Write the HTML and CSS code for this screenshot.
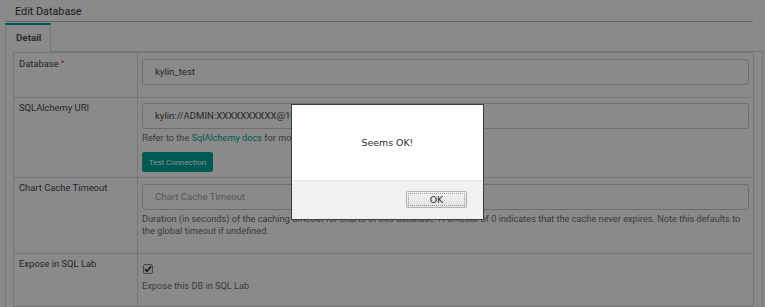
FILE: index.html
```html
<!DOCTYPE html>
<html>
<head>
<meta charset="utf-8">
<link rel="stylesheet" href="styles.css">
</head>
<body>
<div class="wrap">
  <div class="title">Edit Database</div>
  <ul class="tabs">
    <li class="tab active">Detail</li>
  </ul>
  <div class="tab-content">
    <table class="form">
      <colgroup><col class="c-label"><col></colgroup>
      <tr class="r1">
        <th>Database <span class="req">*</span></th>
        <td><div class="input">kylin_test</div></td>
      </tr>
      <tr class="r2">
        <th>SQLAlchemy URI</th>
        <td>
          <div class="input">kylin://ADMIN:XXXXXXXXXX@10.1.2.3:7070/learn_kylin</div>
          <div class="help">Refer to the <a class="link">SqlAlchemy docs</a> for more information on how to structure your URI.</div>
          <button class="btn">Test Connection</button>
        </td>
      </tr>
      <tr class="r3">
        <th>Chart Cache Timeout</th>
        <td>
          <div class="input placeholder">Chart Cache Timeout</div>
          <div class="help">Duration (in seconds) of the caching timeout for charts of this database. A timeout of 0 indicates that the cache never expires. Note this defaults to the global timeout if undefined.</div>
        </td>
      </tr>
      <tr class="r4">
        <th>Expose in SQL Lab</th>
        <td>
          <span class="check"><svg width="8" height="8" viewBox="0 0 8 8"><path d="M1 4.2 L3 6.2 L7 1.6" fill="none" stroke="#222" stroke-width="1.6"/></svg></span>
          <div class="help h4">Expose this DB in SQL Lab</div>
        </td>
      </tr>
      <tr class="r5">
        <th></th>
        <td></td>
      </tr>
    </table>
  </div>
</div>
<div class="overlay"></div>
<div class="dialog">
  <div class="dialog-body">Seems OK!</div>
  <div class="dialog-foot"><button class="ok"><span>OK</span></button></div>
</div>
</body>
</html>
```

FILE: styles.css
```css
html, body {
  margin: 0;
  padding: 0;
  background: #fff;
  height: 100%;
  overflow: hidden;
}
body {
  font-family: Roboto, "Liberation Sans", Arial, sans-serif;
  color: #484848;
  font-size: 9.4px;
}
.wrap {
  margin-left: 5px;
  width: 758px;
}
.title {
  height: 22px;
  box-sizing: border-box;
  border-bottom: 1px solid #bbb;
  margin-right: 10px;
  padding-left: 10px;
  font-size: 10.8px;
  line-height: 23px;
  color: #333;
}
.tabs {
  list-style: none;
  margin: 0;
  padding: 0;
  display: flex;
  border-bottom: 1px solid #ddd;
  height: 29px;
}
.tab {
  width: 46px;
  box-sizing: border-box;
  margin-top: 1px;
  height: 29px;
  border: 1px solid #ddd;
  border-top: 2px solid #00a699;
  border-bottom: none;
  background: #fff;
  padding-left: 10px;
  font-weight: bold;
  font-size: 9.8px;
  line-height: 25px;
  color: #555;
}
.tab-content {
  border-left: 1px solid #ddd;
  border-right: 1px solid #ddd;
  padding: 0 8px 0 7px;
  height: 260px;
}
.form {
  width: 100%;
  table-layout: fixed;
  border-collapse: collapse;
  border: 1px solid #ddd;
  border-top: none;
}
.c-label { width: 124px; }
.form th, .form td {
  border: 1px solid #ddd;
  vertical-align: top;
  text-align: left;
}
.form th {
  font-weight: normal;
  padding: 3px 5px 0;
  line-height: 13px;
  color: #484848;
}
.form td {
  padding: 6px 4px 12px;
}
.req {
  color: #e04355;
  font-size: 8px;
  vertical-align: 2px;
}
.input {
  height: 26px;
  box-sizing: border-box;
  border: 1px solid #ccc;
  border-radius: 3px;
  background: #fff;
  padding-left: 12px;
  line-height: 24px;
  font-size: 9.6px;
  color: #484848;
  white-space: nowrap;
  overflow: hidden;
}
.input.placeholder {
  color: #a3a3a3;
}
.r2 td { padding-top: 5px; padding-bottom: 5px; }
.help {
  margin-top: 3px;
  margin-bottom: 3px;
  line-height: 12px;
  font-size: 9.2px;
  color: #6e6e6e;
}
.r3 .help { margin-bottom: 4px; }
.link { color: #00a699; }
.btn {
  display: block;
  margin-top: 8px;
  height: 20px;
  width: 71px;
  padding: 0;
  border: 1px solid #00a699;
  border-radius: 2px;
  background: #00a699;
  color: #fff;
  font-family: Roboto, "Liberation Sans", Arial, sans-serif;
  font-size: 7.9px;
}
.r4 td { padding-top: 10px; padding-bottom: 11px; }
.check {
  display: flex;
  align-items: center;
  justify-content: center;
  margin-left: 1px;
  width: 10px;
  height: 10px;
  box-sizing: border-box;
  border: 1px solid #888;
  border-radius: 2px;
  background: #f4f4f4;
}
.h4 { margin-top: 6px; }
.r5 td { height: 30px; }
.overlay {
  position: fixed;
  inset: 0;
  background: rgba(0, 0, 0, 0.46);
}
.dialog {
  position: fixed;
  left: 291px;
  top: 104px;
  width: 193px;
  height: 116px;
  box-sizing: border-box;
  border: 1px solid #3c3c3c;
  background: #fff;
  display: flex;
  flex-direction: column;
  font-family: "DejaVu Sans", sans-serif;
  color: #2e2e2e;
}
.dialog-body {
  height: 75px;
  box-sizing: border-box;
  text-align: center;
  padding-top: 32px;
  font-size: 9.4px;
  line-height: 12px;
}
.dialog-foot {
  flex: 1;
  background: #f1f1f1;
  border-top: 1px solid #e8e8e8;
  display: flex;
  justify-content: flex-end;
  align-items: flex-start;
  padding: 10px 16px 0 0;
}
.ok {
  width: 61px;
  height: 17px;
  padding: 1px;
  border: 1px solid #b4b4b4;
  border-radius: 2px;
  background: linear-gradient(#f2f2f2, #e2e2e2);
  font-family: "DejaVu Sans", sans-serif;
  font-size: 9.4px;
  color: #2e2e2e;
}
.ok span {
  display: block;
  height: 100%;
  box-sizing: border-box;
  border: 1px dotted #9a9a9a;
  line-height: 11px;
}
```
